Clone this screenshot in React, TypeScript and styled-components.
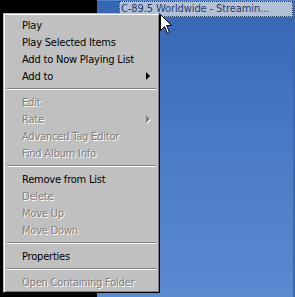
import React from 'react';
import styled, { createGlobalStyle } from 'styled-components';

const GlobalStyle = createGlobalStyle`
  html, body {
    margin: 0;
    padding: 0;
    background: #000;
  }
  body {
    font-family: Tahoma, "DejaVu Sans Condensed", "DejaVu Sans", sans-serif;
  }
`;

type Entry =
  | { kind: 'item'; label: string; disabled?: boolean; submenu?: boolean }
  | { kind: 'sep' };

const entries: Entry[] = [
  { kind: 'item', label: 'Play' },
  { kind: 'item', label: 'Play Selected Items' },
  { kind: 'item', label: 'Add to Now Playing List' },
  { kind: 'item', label: 'Add to', submenu: true },
  { kind: 'sep' },
  { kind: 'item', label: 'Edit', disabled: true },
  { kind: 'item', label: 'Rate', disabled: true, submenu: true },
  { kind: 'item', label: 'Advanced Tag Editor', disabled: true },
  { kind: 'item', label: 'Find Album Info', disabled: true },
  { kind: 'sep' },
  { kind: 'item', label: 'Remove from List' },
  { kind: 'item', label: 'Delete', disabled: true },
  { kind: 'item', label: 'Move Up', disabled: true },
  { kind: 'item', label: 'Move Down', disabled: true },
  { kind: 'sep' },
  { kind: 'item', label: 'Properties' },
  { kind: 'sep' },
  { kind: 'item', label: 'Open Containing Folder', disabled: true },
];

const App: React.FC = () => {
  return (
    <>
      <GlobalStyle />
      <Desktop>
        <LeftPane />
        <ListPane>
          <ListRow>
            <RowGutter />
            <SelectedCell>C-89.5 Worldwide - Streamin...</SelectedCell>
          </ListRow>
        </ListPane>

        <Menu>
          {entries.map((e, i) =>
            e.kind === 'sep' ? (
              <Separator key={i} />
            ) : (
              <Item key={i} $disabled={e.disabled}>
                <span>{e.label}</span>
                {e.submenu && <Arrow $disabled={e.disabled} />}
              </Item>
            )
          )}
        </Menu>

        <Cursor width="13" height="21" viewBox="0 0 13 21">
          <path
            d="M0.5 0.5 L0.5 16.5 L4.5 12.5 L7.5 19.5 L9.5 18.5 L6.7 11.5 L11.5 11.5 Z"
            fill="#fff"
            stroke="#000"
            strokeWidth="1"
            strokeLinejoin="miter"
          />
        </Cursor>
      </Desktop>
    </>
  );
};

const Desktop = styled.div`
  position: relative;
  width: 295px;
  height: 297px;
  display: flex;
  overflow: hidden;
  background: #000;
`;

const LeftPane = styled.div`
  width: 97px;
  flex: none;
  background: #000;
`;

const ListPane = styled.div`
  flex: 1;
  background: linear-gradient(180deg, #3566b4 0%, #4a7bc6 50%, #5b8ad1 100%);
  border-top: 1px solid #5484cc;
  border-right: 2px solid #3d6aae;
`;

const ListRow = styled.div`
  display: flex;
  height: 16px;
`;

const RowGutter = styled.div`
  width: 21px;
  border-right: 1px solid #2f5ea6;
`;

const SelectedCell = styled.div`
  flex: 1;
  box-sizing: border-box;
  background: #b3bfd3;
  border: 1px dotted #2c3f63;
  color: #1f3d70;
  font-size: 11px;
  line-height: 14px;
  letter-spacing: -0.1px;
  padding-left: 1px;
  white-space: nowrap;
  overflow: hidden;
`;

const Menu = styled.div`
  position: absolute;
  left: 3px;
  top: 13px;
  width: 157px;
  box-sizing: border-box;
  background: #c0c0c0;
  border-top: 1px solid #c0c0c0;
  border-left: 1px solid #c0c0c0;
  border-right: 1px solid #000;
  border-bottom: 1px solid #000;
  box-shadow: inset 1px 1px 0 #fff, inset -1px -1px 0 #808080;
  padding: 2px;
  display: flex;
  flex-direction: column;
`;

const Item = styled.div<{ $disabled?: boolean }>`
  position: relative;
  height: 17px;
  display: flex;
  align-items: center;
  padding-left: 16px;
  padding-top: 1px;
  box-sizing: border-box;
  font-size: 11px;
  letter-spacing: -0.2px;
  color: ${(p) => (p.$disabled ? '#808080' : '#000')};
  text-shadow: ${(p) => (p.$disabled ? '1px 1px 0 #fff' : 'none')};
  white-space: nowrap;
`;

const Arrow = styled.span<{ $disabled?: boolean }>`
  position: absolute;
  right: 7px;
  top: 5px;
  width: 0;
  height: 0;
  border-top: 4px solid transparent;
  border-bottom: 4px solid transparent;
  border-left: 4px solid ${(p) => (p.$disabled ? '#808080' : '#000')};
  filter: ${(p) => (p.$disabled ? 'drop-shadow(1px 1px 0 #fff)' : 'none')};
`;

const Separator = styled.div`
  height: 9px;
  display: flex;
  flex-direction: column;
  justify-content: center;
  padding: 0 1px;

  &::before {
    content: '';
    display: block;
    height: 1px;
    background: #808080;
  }
  &::after {
    content: '';
    display: block;
    height: 1px;
    background: #fff;
  }
`;

const Cursor = styled.svg`
  position: absolute;
  left: 160px;
  top: 14px;
`;

export default App;
